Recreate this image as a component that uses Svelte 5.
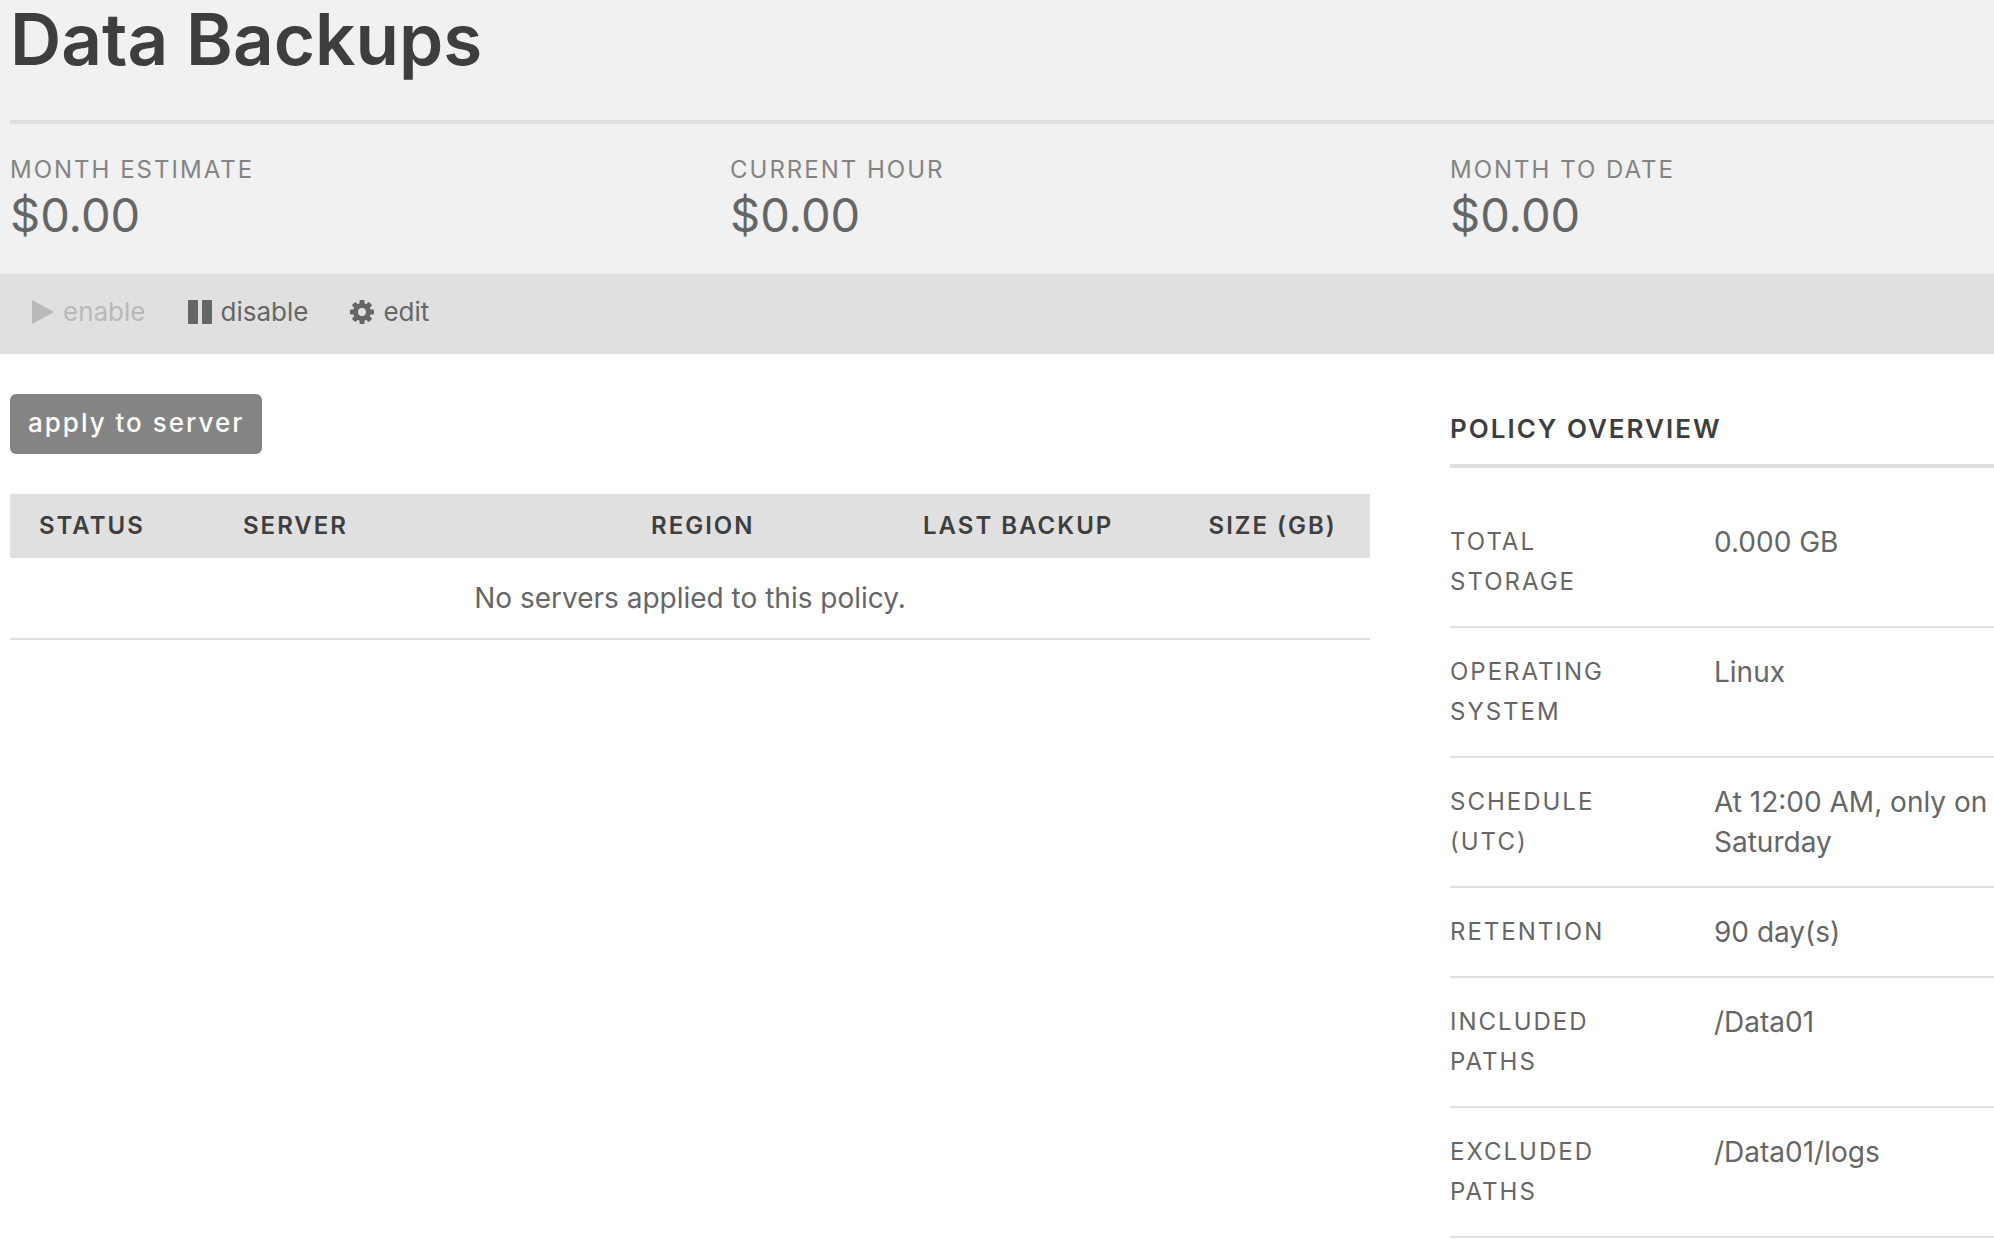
<script>
  const stats = [
    { label: 'Month Estimate', value: '$0.00' },
    { label: 'Current Hour', value: '$0.00' },
    { label: 'Month to Date', value: '$0.00' },
  ];

  const columns = [
    { label: 'Status', width: 15 },
    { label: 'Server', width: 30 },
    { label: 'Region', width: 20 },
    { label: 'Last Backup', width: 21 },
    { label: 'Size (GB)', width: 14 },
  ];

  const overview = [
    { label: 'Total Storage', value: '0.000 GB' },
    { label: 'Operating System', value: 'Linux' },
    { label: 'Schedule (UTC)', value: 'At 12:00 AM, only on Saturday' },
    { label: 'Retention', value: '90 day(s)' },
    { label: 'Included Paths', value: '/Data01' },
    { label: 'Excluded Paths', value: '/Data01/logs' },
  ];

  const teeth = [0, 45, 90, 135, 180, 225, 270, 315];

  let servers = $state([]);
  let enabled = $state(true);
</script>

<header>
  <h1>Data Backups</h1>
  <dl class="stats">
    {#each stats as stat}
      <div class="stat">
        <dt>{stat.label}</dt>
        <dd>{stat.value}</dd>
      </div>
    {/each}
  </dl>
</header>

<div class="toolbar">
  <button class="action" disabled={enabled} onclick={() => (enabled = true)}>
    <svg class="icon" width="22" height="24" viewBox="0 0 22 24"><path d="M0 0 22 12 0 24z" /></svg>
    enable
  </button>
  <button class="action" disabled={!enabled} onclick={() => (enabled = false)}>
    <svg class="icon" width="24" height="24" viewBox="0 0 24 24">
      <rect width="10" height="24" rx="1" />
      <rect x="14" width="10" height="24" rx="1" />
    </svg>
    disable
  </button>
  <button class="action">
    <svg class="icon" width="24" height="24" viewBox="0 0 24 24">
      <circle class="ring" cx="12" cy="12" r="6.5" />
      {#each teeth as angle}
        <rect x="9.500" width="5" height="5" rx="1" transform="rotate({angle} 12 12)" />
      {/each}
    </svg>
    edit
  </button>
</div>

<main>
  <section>
    <button class="apply">apply to server</button>
    <table>
      <colgroup>
        {#each columns as column}
          <col style="width: {column.width}%" />
        {/each}
      </colgroup>
      <thead>
        <tr>
          {#each columns as column}
            <th>{column.label}</th>
          {/each}
        </tr>
      </thead>
      <tbody>
        {#each servers as server}
          <tr>
            <td>{server.status}</td>
            <td>{server.name}</td>
            <td>{server.region}</td>
            <td>{server.lastBackup}</td>
            <td>{server.size}</td>
          </tr>
        {:else}
          <tr>
            <td class="empty" colspan={columns.length}>No servers applied to this policy.</td>
          </tr>
        {/each}
      </tbody>
    </table>
  </section>

  <aside>
    <h2>Policy Overview</h2>
    <dl>
      {#each overview as item}
        <div class="row">
          <dt>{item.label}</dt>
          <dd>{item.value}</dd>
        </div>
      {/each}
    </dl>
  </aside>
</main>

<style>
  :global(body) {
    background: #fff;
    color: #666;
    font-family: Inter, 'Liberation Sans', sans-serif;
    font-size: 28px;
    line-height: 40px;
  }

  h1,
  h2,
  dl,
  dd {
    margin: 0;
  }

  button {
    border: 0;
    font-family: inherit;
    cursor: pointer;
  }

  header {
    padding: 0 0 29px 10px;
    background: #f1f1f1;
  }

  h1 {
    padding-bottom: 42px;
    border-bottom: 4px solid #e0e0e0;
    color: #3e3e3e;
    font-size: 71px;
    font-weight: 600;
    line-height: 78px;
  }

  dt,
  th,
  h2 {
    font-size: 24px;
    letter-spacing: 2px;
    text-transform: uppercase;
  }

  .stats {
    display: grid;
    grid-template-columns: 20fr 20fr 17fr;
    gap: 80px;
    padding-top: 31px;
  }

  .stat dt {
    color: #848484;
    line-height: 30px;
  }

  .stat dd {
    font-size: 47px;
    line-height: 60px;
  }

  .toolbar {
    display: flex;
    gap: 42px;
    padding: 18px 32px 22px;
    background: #e0e0e0;
  }

  .action {
    display: flex;
    align-items: center;
    gap: 9px;
    padding: 0;
    background: none;
    color: #666;
    font-size: 26px;
    line-height: 40px;
  }

  .action:disabled {
    color: #b9b9b9;
    cursor: default;
  }

  .icon {
    fill: currentColor;
  }

  .ring {
    fill: none;
    stroke: currentColor;
    stroke-width: 5;
  }

  main {
    display: grid;
    grid-template-columns: 5fr 2fr;
    gap: 80px;
    padding: 40px 0 0 10px;
  }

  .apply {
    display: block;
    padding: 9px 18px 11px;
    border-radius: 6px;
    background: #848484;
    color: #fff;
    font-size: 26px;
    font-weight: 500;
    line-height: 40px;
    letter-spacing: 2px;
  }

  table {
    width: 100%;
    margin-top: 40px;
    border-collapse: collapse;
    table-layout: fixed;
  }

  th {
    padding: 12px 0 12px 29px;
    background: #e0e0e0;
    color: #3e3e3e;
    font-weight: 600;
    text-align: left;
    white-space: nowrap;
  }

  td {
    padding: 20px 30px;
    border-bottom: 2px solid #e0e0e0;
  }

  .empty {
    text-align: center;
  }

  h2 {
    margin-bottom: 30px;
    padding: 15px 0;
    border-bottom: 4px solid #e0e0e0;
    color: #3e3e3e;
    font-size: 26px;
    font-weight: 600;
  }

  .row {
    display: grid;
    grid-template-columns: 184px 1fr;
    gap: 80px;
    padding: 24px 0;
    border-bottom: 2px solid #e0e0e0;
  }
</style>
